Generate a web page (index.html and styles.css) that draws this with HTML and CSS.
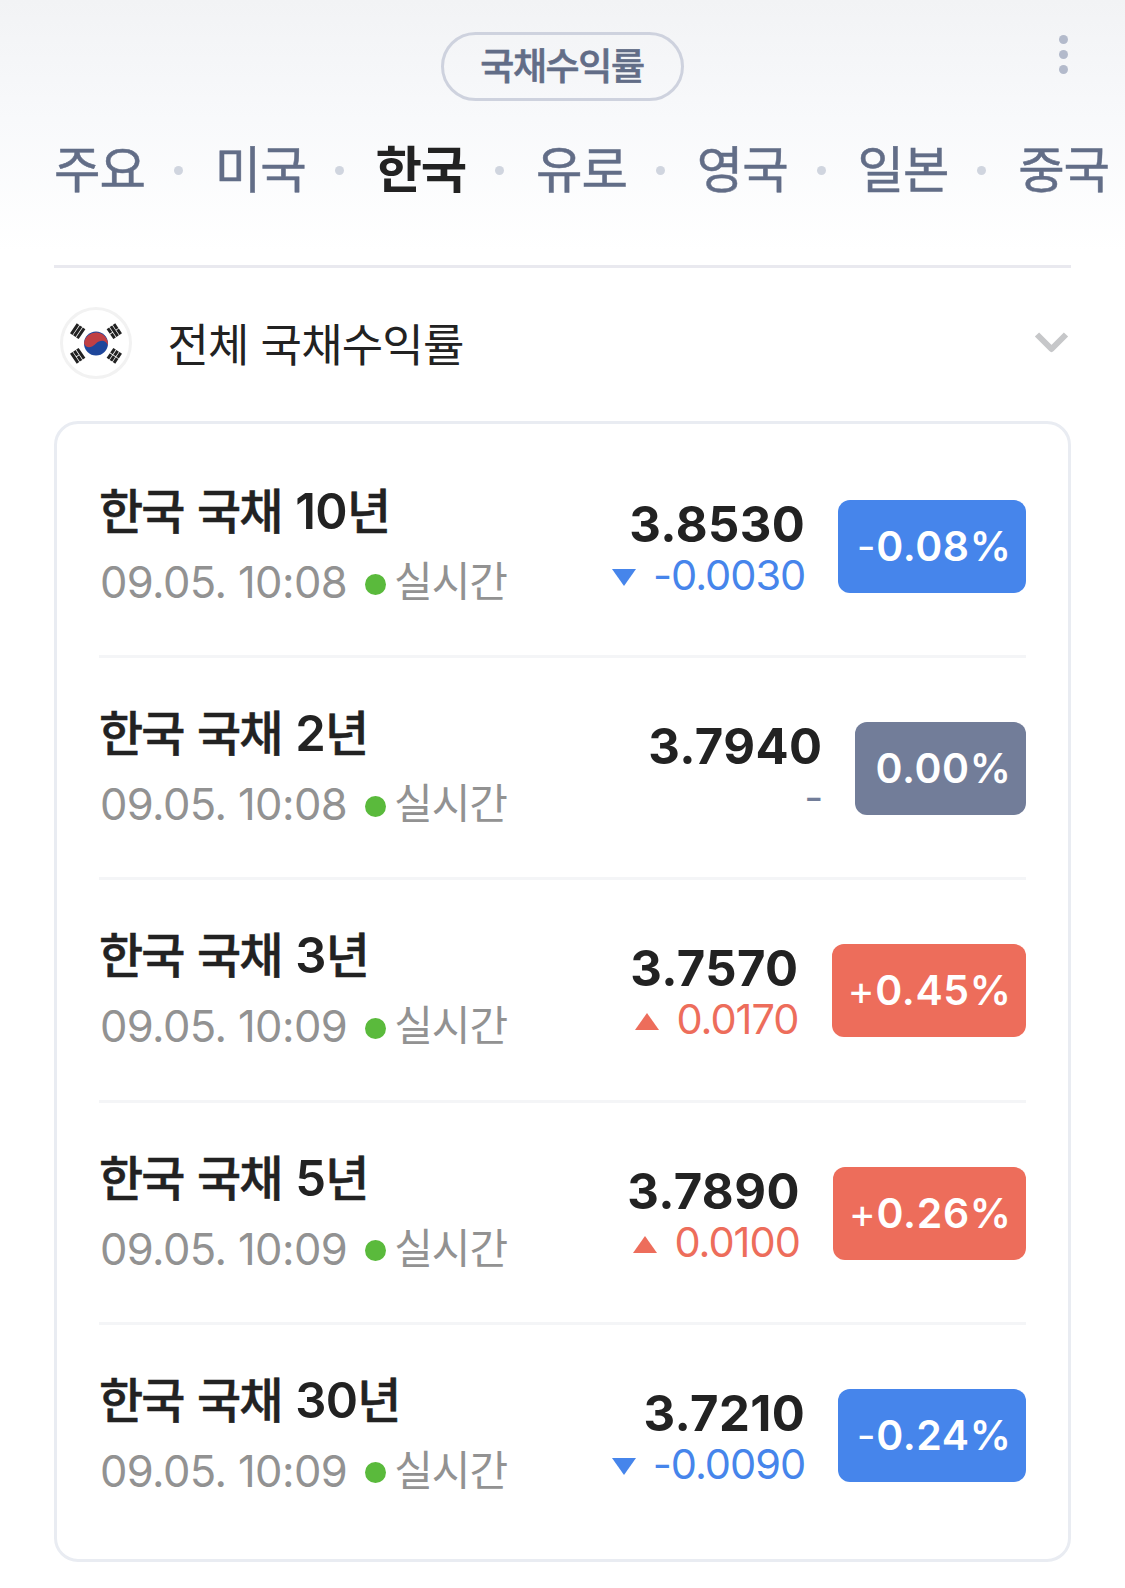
FILE: index.html
```html
<!DOCTYPE html>
<html lang="ko">
<head>
    <meta charset="UTF-8">
    <meta name="viewport" content="width=device-width, initial-scale=1.0">
    <title>국채수익률</title>
    <link rel="stylesheet" href="styles.css">
</head>
<body>

    <header class="header">
        <div class="top-bar">
            <h1 class="pill">국채수익률</h1>
            <button class="more" aria-label="더보기"><i></i><i></i><i></i></button>
        </div>
        <nav class="tabs">
            <a class="tab">주요</a>
            <a class="tab">미국</a>
            <a class="tab active">한국</a>
            <a class="tab">유로</a>
            <a class="tab">영국</a>
            <a class="tab">일본</a>
            <a class="tab">중국</a>
        </nav>
    </header>

    <main class="content">
        <div class="selector">
            <svg class="flag" viewBox="0 0 72 72">
                <circle cx="36" cy="36" r="34.5" fill="#fff" stroke="#f2f2f2" stroke-width="3"/>
                <g transform="translate(36 36.5)">
                    <circle r="12" fill="#1e469b"/>
                    <path d="M-12 0A12 12 0 0 1 12 2C10-4 4-4 0 0S-9 6-12 0Z" fill="#c03f44"/>
                    <g stroke="#222" stroke-width="3">
                        <g transform="translate(-18.3 -12.3) rotate(-56)"><path d="M-6-3.7H6M-6 0H6M-6 3.7H6"/></g>
                        <g transform="translate(18.3 12.3) rotate(-56)"><path d="M-6-3.7H-.4M.4-3.7H6M-6 0H-.4M.4 0H6M-6 3.7H-.4M.4 3.7H6"/></g>
                        <g transform="translate(18.3 -12.3) rotate(56)"><path d="M-6-3.7H-.4M.4-3.7H6M-6 0H6M-6 3.7H-.4M.4 3.7H6"/></g>
                        <g transform="translate(-18.3 12.3) rotate(56)"><path d="M-6-3.7H6M-6 0H-.4M.4 0H6M-6 3.7H6"/></g>
                    </g>
                </g>
            </svg>
            <span class="selector-name">전체 국채수익률</span>
            <svg class="chevron" viewBox="0 0 34 22">
                <path d="M2 2.5L16.5 17L31 2.5" fill="none" stroke="#c6c7c9" stroke-width="6" stroke-linejoin="round"/>
            </svg>
        </div>

        <ul class="card">
            <li class="row down">
                <div class="info">
                    <strong class="name">한국 국채 <span class="num">10</span>년</strong>
                    <span class="time">09.05. 10:08<em class="live">실시간</em></span>
                </div>
                <div class="quote">
                    <span class="price">3.8530</span>
                    <span class="change"><svg class="arrow" viewBox="0 0 24 17"><path d="M0 0H24L12 17Z"/></svg>-0.0030</span>
                </div>
                <div class="badge"><span class="sign">-</span>0.08%</div>
            </li>
            <li class="row flat">
                <div class="info">
                    <strong class="name">한국 국채 <span class="num">2</span>년</strong>
                    <span class="time">09.05. 10:08<em class="live">실시간</em></span>
                </div>
                <div class="quote">
                    <span class="price">3.7940</span>
                    <span class="change">-</span>
                </div>
                <div class="badge">0.00%</div>
            </li>
            <li class="row up">
                <div class="info">
                    <strong class="name">한국 국채 <span class="num">3</span>년</strong>
                    <span class="time">09.05. 10:09<em class="live">실시간</em></span>
                </div>
                <div class="quote">
                    <span class="price">3.7570</span>
                    <span class="change"><svg class="arrow" viewBox="0 0 24 17"><path d="M0 17H24L12 0Z"/></svg>0.0170</span>
                </div>
                <div class="badge"><span class="sign">+</span>0.45%</div>
            </li>
            <li class="row up">
                <div class="info">
                    <strong class="name">한국 국채 <span class="num">5</span>년</strong>
                    <span class="time">09.05. 10:09<em class="live">실시간</em></span>
                </div>
                <div class="quote">
                    <span class="price">3.7890</span>
                    <span class="change"><svg class="arrow" viewBox="0 0 24 17"><path d="M0 17H24L12 0Z"/></svg>0.0100</span>
                </div>
                <div class="badge"><span class="sign">+</span>0.26%</div>
            </li>
            <li class="row down">
                <div class="info">
                    <strong class="name">한국 국채 <span class="num">30</span>년</strong>
                    <span class="time">09.05. 10:09<em class="live">실시간</em></span>
                </div>
                <div class="quote">
                    <span class="price">3.7210</span>
                    <span class="change"><svg class="arrow" viewBox="0 0 24 17"><path d="M0 0H24L12 17Z"/></svg>-0.0090</span>
                </div>
                <div class="badge"><span class="sign">-</span>0.24%</div>
            </li>
        </ul>
    </main>

</body>
</html>
```
FILE: styles.css
```css
* {
    box-sizing: border-box;
}
body {
    margin: 0;
    background-color: #fff;
    color: #222;
    font-family: Inter, "Noto Sans CJK KR", sans-serif;
    overflow-x: hidden;
}
.header {
    height: 265px;
    padding-top: 32px;
    background: linear-gradient(#f2f3f5, #f8f9fb 45%, #fff 95%);
}
.top-bar {
    display: grid;
    grid-template-columns: 1fr auto 1fr;
    align-items: start;
    padding: 0 57px;
}
.pill {
    grid-column: 2;
    width: 243px;
    height: 69px;
    margin: 0;
    padding-right: 1px;
    border: 3px solid #ced2de;
    border-radius: 35px;
    color: #626d87;
    font-size: 37px;
    font-weight: 500;
    line-height: 64px;
    letter-spacing: -1.3px;
    text-align: center;
    -webkit-text-stroke: 0.6px;
}
.more {
    justify-self: end;
    display: flex;
    flex-direction: column;
    gap: 6px;
    margin-top: 3px;
    padding: 0;
    border: none;
    background: none;
}
.more i {
    width: 9px;
    height: 9px;
    border-radius: 50%;
    background-color: #b3bacb;
}
.tabs {
    display: flex;
    margin-top: 31px;
    padding-left: 54px;
}
.tab {
    display: flex;
    flex: none;
    align-items: center;
    width: 160.7px;
    color: #626d87;
    font-size: 50.5px;
    line-height: 76px;
    letter-spacing: -1px;
    white-space: nowrap;
    -webkit-text-stroke: 0.5px;
}
.tab:not(:last-child)::after {
    content: "";
    width: 9px;
    height: 9px;
    margin: 1px 0 0 29px;
    border-radius: 50%;
    background-color: #d0d5df;
}
.tab.active {
    color: #222;
    font-weight: 700;
    -webkit-text-stroke: 0;
}
.content {
    margin: 0 54px;
    border-top: 3px solid #e9e9ef;
}
.selector {
    display: flex;
    align-items: center;
    height: 153px;
    padding: 0 2px 3px 6px;
}
.flag {
    width: 72px;
    height: 72px;
}
.selector-name {
    margin: 5px 0 0 35.5px;
    font-size: 45px;
    line-height: 60px;
    letter-spacing: -0.8px;
}
.chevron {
    width: 34px;
    height: 22px;
    margin-left: auto;
    overflow: visible;
}
.card {
    height: 1141px;
    margin: 0;
    padding: 12px 42px 0;
    border: 3px solid #e9ecf2;
    border-radius: 24px;
    list-style: none;
}
.row {
    display: flex;
    align-items: flex-start;
    height: 222.2px;
    padding-top: 46px;
    border-bottom: 3px solid #f4f5f7;
}
.row:last-child {
    border-bottom: none;
}
.name {
    display: block;
    font-size: 48px;
    font-weight: 500;
    line-height: 60px;
    letter-spacing: -2px;
    word-spacing: 3px;
    -webkit-text-stroke: 0.5px;
}
.num {
    font-size: 49px;
    font-weight: 600;
    letter-spacing: -0.7px;
    -webkit-text-stroke: 0;
}
.time {
    display: flex;
    align-items: center;
    margin: 12px 0 0 1px;
    color: #929292;
    font-size: 43.5px;
    line-height: 56px;
    letter-spacing: -0.6px;
}
.live {
    display: flex;
    align-items: center;
    font-size: 42px;
    font-style: normal;
    letter-spacing: -1px;
}
.live::before {
    content: "";
    width: 21px;
    height: 21px;
    margin: 4px 8px 0 18px;
    border-radius: 50%;
    background-color: #5aba3c;
}
.quote {
    margin: 16px 33px 0 auto;
    text-align: right;
}
.price {
    display: block;
    font-size: 49px;
    font-weight: 700;
    line-height: 54px;
    letter-spacing: 0.4px;
}
.change {
    display: block;
    font-size: 41.5px;
    line-height: 47px;
    letter-spacing: -1px;
}
.arrow {
    width: 24px;
    height: 17px;
    margin-right: 17px;
    vertical-align: 4px;
    fill: currentColor;
}
.badge {
    height: 93px;
    margin-top: 18px;
    padding: 0 14.5px 0 18.5px;
    border-radius: 12px;
    color: #fff;
    font-size: 41px;
    font-weight: 600;
    line-height: 93px;
    letter-spacing: 0.6px;
}
.sign {
    font-weight: 400;
}
.down .change {
    color: #4685eb;
}
.down .badge {
    background-color: #4685eb;
}
.up .change {
    color: #ed6d5b;
}
.up .badge {
    padding-left: 16px;
    background-color: #ed6d5b;
}
.flat .change {
    color: #727d99;
}
.flat .badge {
    padding-left: 20px;
    background-color: #727d99;
}
```
